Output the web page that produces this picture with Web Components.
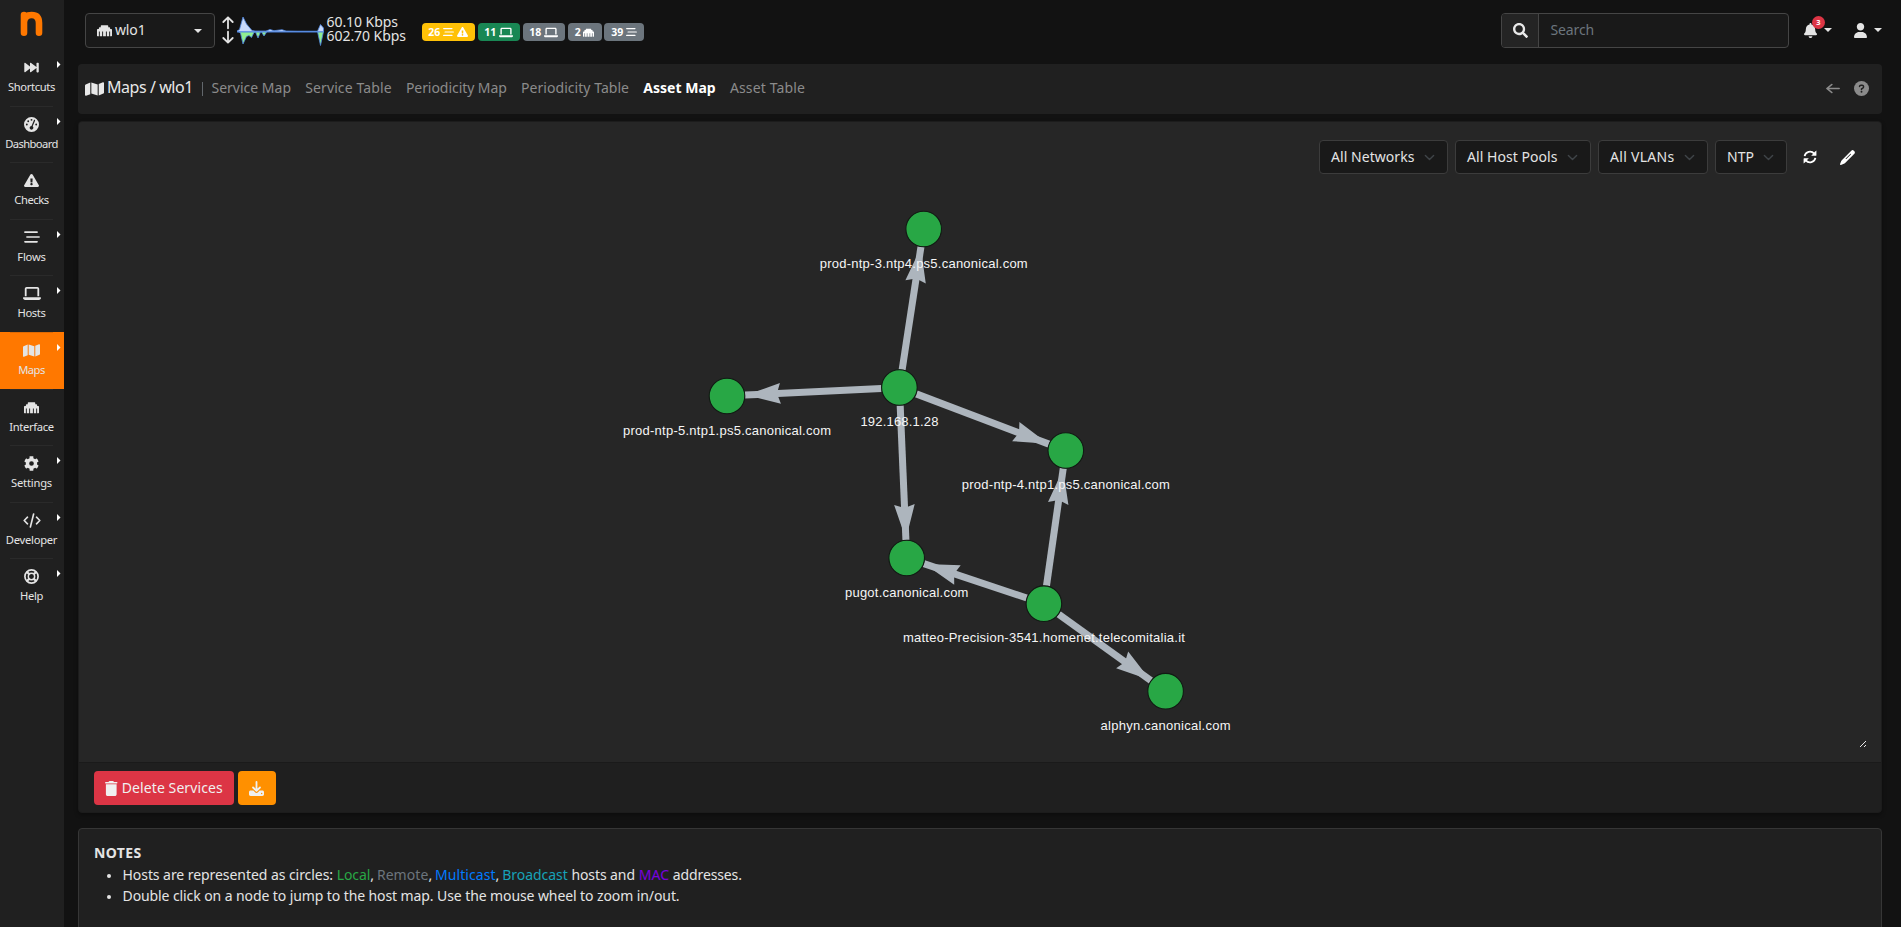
<!DOCTYPE html>
<html lang="en">
<head>
<meta charset="utf-8">
<title>ntopng - Asset Map</title>
<style>
html,body{margin:0;height:100%;overflow:hidden;background:#121212}
body{font:14px/21px "Noto Sans","Open Sans",sans-serif;color:#e4e4e4}
</style>
</head>
<body>
<nt-app></nt-app>
<script>
const ICONS={
 forward:['0 0 512 512','<path d="M10 84c0-16 16-24 28-14l166 148V84c0-16 16-24 28-14l194 168V84c0-12 10-20 22-20h34c12 0 22 8 22 20v344c0 12-10 20-22 20h-34c-12 0-22-8-22-20V274L232 442c-12 10-28 2-28-14V294L38 442c-12 10-28 2-28-14z"/>'],
 gauge:['0 0 512 512','<path fill-rule="evenodd" d="M256 0a256 256 0 1 1 0 512a256 256 0 0 1 0-512zM256 64a32 32 0 1 0 0 64a32 32 0 0 0 0-64zM144 112a32 32 0 1 0 0 64a32 32 0 0 0 0-64zM96 224a32 32 0 1 0 0 64a32 32 0 0 0 0-64zM416 224a32 32 0 1 0 0 64a32 32 0 0 0 0-64zM367 95c-11-5-25 0-30 12l-81 196c-35 0-64 29-64 65s29 64 64 64 64-29 64-64c0-20-9-38-24-50l82-192c5-12 0-26-11-31z"/>'],
 warn:['0 0 576 512','<path d="M569.517 440.013C587.975 472.007 564.806 512 527.94 512H48.054c-36.937 0-59.999-40.055-41.577-71.987L246.423 23.985c18.467-32.009 64.72-31.951 83.154 0l239.94 416.028zM288 354c-25.405 0-46 20.595-46 46s20.595 46 46 46 46-20.595 46-46-20.595-46-46-46zm-43.673-165.346l7.418 136c.347 6.364 5.609 11.346 11.982 11.346h48.546c6.373 0 11.635-4.982 11.982-11.346l7.418-136c.375-6.874-5.098-12.654-11.982-12.654h-63.383c-6.884 0-12.356 5.78-11.981 12.654z"/>'],
 flows:['0 0 512 512','<g fill="none" stroke="currentColor" stroke-width="60" stroke-linecap="round"><path d="M32 80H416M96 256H480M32 432H416"/></g>'],
 laptop:['0 0 640 512','<path fill-rule="evenodd" d="M128 32c-35 0-64 29-64 64v256h64V96h384v256h64V96c0-35-29-64-64-64zM19 384c-11 0-19 9-19 19c0 43 34 77 77 77h486c43 0 77-34 77-77c0-10-8-19-19-19z"/>'],
 map:['0 0 576 512','<path d="M0 140c0-13 8-25 20-30L160 50v370L32 471c-16 6-32-5-32-22zM192 48l192 64v352l-192-64zM416 92l128-51c16-6 32 5 32 22v309c0 13-8 25-20 30L416 462z"/>'],
 ethernet:['0 0 512 512','<path d="M0 232c0-14 10-24 24-24h40v-40c0-14 10-24 24-24h40v-40c0-14 10-24 24-24h208c14 0 24 10 24 24v40h40c14 0 24 10 24 24v40h40c14 0 24 10 24 24v200c0 10-6 16-16 16h-48V288h-32v160h-80V288h-32v160h-96V288h-32v160h-80V288H64v160H16c-10 0-16-6-16-16z"/>'],
 gear:['0 0 512 512','<path fill-rule="evenodd" d="M487 316l-43-25a193 193 0 0 0 0-70l43-25c5-3 7-9 6-14-11-36-30-69-55-96-4-4-10-5-15-3l-43 25a191 191 0 0 0-61-35V24c0-6-4-11-10-12a254 254 0 0 0-110 0c-6 1-10 6-10 12v49a197 197 0 0 0-61 35L86 83c-5-3-11-2-15 3a253 253 0 0 0-55 96c-2 5 1 11 6 14l43 25a194 194 0 0 0 0 70l-43 25c-5 3-7 9-6 14 11 36 30 69 55 96 4 4 10 5 15 3l43-25a191 191 0 0 0 61 35v49c0 6 4 11 10 12a254 254 0 0 0 110 0c6-1 10-6 10-12v-49a197 197 0 0 0 61-35l43 25c5 3 11 2 15-3 25-27 44-60 55-96 1-5-1-11-7-14zM256 336a80 80 0 1 1 0-160a80 80 0 0 1 0 160z"/>'],
 code:['0 0 640 512','<g fill="none" stroke="currentColor" stroke-width="58" stroke-linecap="round" stroke-linejoin="round"><path d="M160 144L42 256L160 368M480 144L598 256L480 368M378 36L262 476"/></g>'],
 help:['0 0 512 512','<g fill="none" stroke="currentColor"><circle cx="256" cy="256" r="225" stroke-width="58"/><circle cx="256" cy="256" r="108" stroke-width="50"/><path stroke-width="72" d="M90 90L182 182M422 90L330 182M90 422L182 330M422 422L330 330"/></g>'],
 search:['0 0 512 512','<path d="M505 442.7L405.3 343c-4.5-4.5-10.6-7-17-7H372c27.6-35.3 44-79.7 44-128C416 93.1 322.9 0 208 0S0 93.1 0 208s93.1 208 208 208c48.3 0 92.7-16.4 128-44v16.3c0 6.4 2.5 12.5 7 17l99.7 99.7c9.4 9.4 24.6 9.4 33.9 0l28.3-28.3c9.4-9.4 9.4-24.6.1-34zM208 336c-70.7 0-128-57.2-128-128 0-70.7 57.2-128 128-128 70.7 0 128 57.2 128 128 0 70.7-57.2 128-128 128z"/>'],
 bell:['0 0 448 512','<path d="M224 512c35.32 0 63.97-28.65 63.97-64H160.03c0 35.35 28.65 64 63.97 64zm215.39-149.71c-19.32-20.76-55.47-51.99-55.47-154.29 0-77.7-54.48-139.9-127.94-155.16V32c0-17.67-14.32-32-31.98-32s-31.98 14.33-31.98 32v20.84C118.56 68.1 64.08 130.3 64.08 208c0 102.3-36.15 133.53-55.47 154.29-6 6.45-8.66 14.16-8.61 21.71.11 16.4 12.98 32 32.1 32h383.8c19.12 0 32-15.6 32.1-32 .05-7.55-2.61-15.27-8.61-21.71z"/>'],
 user:['0 0 448 512','<path d="M224 256c70.7 0 128-57.3 128-128S294.7 0 224 0 96 57.3 96 128s57.3 128 128 128zM174 304C78 304 0 382 0 483c0 16 13 29 30 29h388c17 0 30-13 30-29c0-101-78-179-174-179z"/>'],
 left:['0 0 448 512','<path fill="none" stroke="currentColor" stroke-width="52" stroke-linecap="round" stroke-linejoin="round" d="M420 256H32M186 96L30 256L186 416"/>'],
 question:['0 0 512 512','<circle cx="256" cy="256" r="256"/><path fill="none" stroke="#202020" stroke-width="50" stroke-linecap="round" stroke-linejoin="round" d="M188 186c4-30 22-42 50-42h38c62 0 68 78 20 104l-40 24v18"/><circle cx="256" cy="368" r="32" fill="#202020"/>'],
 refresh:['0 0 512 512','<g fill="none" stroke="currentColor" stroke-width="66"><path d="M58 226A202 202 0 0 1 408 132M454 286A202 202 0 0 1 104 380"/></g><path d="M490 20v172c0 12-8 20-20 20H298l56-56l80-90zM22 492V320c0-12 8-20 20-20h172l-56 56l-80 90z"/>'],
 pen:['0 0 512 512','<path fill-rule="evenodd" d="M386 22c24-24 62-24 86 0l18 18c24 24 24 62 0 86L166 450c-10 10-20 16-33 20L30 510c-18 5-33-10-28-28L42 379c4-13 10-23 20-33zM350 136L196 290c-6 6-6 15 0 21s15 6 21 0l154-154c6-6 6-15 0-21s-15-6-21 0z"/>'],
 trash:['0 0 448 512','<path d="M135 18c6-11 17-18 29-18h120c12 0 23 7 29 18l7 14h96c18 0 32 12 32 26s-14 30-32 30H32C14 88 0 72 0 58s14-26 32-26h96zM32 112h384v336c0 36-28 64-64 64H96c-36 0-64-28-64-64z"/>'],
 download:['0 0 512 512','<path fill-rule="evenodd" d="M0 384c0-32 24-56 56-56h94l64 64c24 22 60 22 84 0l64-64h94c32 0 56 24 56 56v72c0 32-24 56-56 56H56c-32 0-56-24-56-56zM432 400a24 24 0 1 0 0 48a24 24 0 0 0 0-48z"/><path fill="none" stroke="currentColor" stroke-width="62" stroke-linecap="round" stroke-linejoin="round" d="M256 32V330M138 222L256 336L374 222"/>'],
 up:['0 0 12 14','<path fill="none" stroke="currentColor" stroke-width="1.8" stroke-linecap="round" stroke-linejoin="round" d="M6 12.3V1.5M1.3 6L6 1.3L10.7 6"/>'],
 down:['0 0 12 14','<path fill="none" stroke="currentColor" stroke-width="1.8" stroke-linecap="round" stroke-linejoin="round" d="M6 1.7V12.5M1.3 8L6 12.7L10.7 8"/>'],
 chevron:['0 0 16 16','<path fill="none" stroke="currentColor" stroke-width="2" stroke-linecap="round" stroke-linejoin="round" d="M2 5l6 6 6-6"/>'],
 caret:['0 0 8 4','<path d="M0 0H8L4 4z"/>'],
 side:['0 0 4 8','<path d="M0 0L4 4L0 8z"/>']
};
function element(name,render,ready){
  customElements.define(name,class extends HTMLElement{
    connectedCallback(){
      if(this.shadowRoot)return;
      this.attachShadow({mode:'open'}).innerHTML=render(this);
      if(ready)ready(this);
    }
  });
}
element('nt-icon',e=>{
  const [vb,body]=ICONS[e.getAttribute('name')];
  const w=e.getAttribute('w')||16,h=e.getAttribute('h')||w;
  return `<style>:host{display:inline-flex;flex:none;width:${w}px;height:${h}px}svg{display:block;width:100%;height:100%}</style><svg viewBox="${vb}" preserveAspectRatio="none" fill="currentColor">${body}</svg>`;
});
/* Text that is tracked to occupy a given advance width. */
element('nt-text',()=>`<style>:host{display:inline-block;flex:none;white-space:nowrap;transform:translateY(-1px)}span{display:inline-block}</style><span><slot></slot></span>`,e=>{
  const w=+e.getAttribute('w'),s=e.shadowRoot.querySelector('span');
  const n=e.textContent.length,nat=s.getBoundingClientRect().width;
  if(w&&nat){e.style.width=w+'px';s.style.letterSpacing=((w-nat)/n)+'px';}
});
element('nt-logo',()=>`<style>:host{display:flex;height:49px;box-sizing:border-box;padding:11px 0 0 20px}</style>
<svg width="23" height="26" viewBox="0 0 23 26" fill="none" stroke="#ff7800" stroke-width="6.6" stroke-linecap="round"><path d="M4 4.1V21.8M4 11C4.6 5.2 8 4 11.6 4C17 4 19 7 19 12V21.8"/></svg>`);
element('nt-side-item',e=>`<style>
:host{display:block;height:56.6px;box-sizing:border-box;position:relative;text-align:center;font-size:11.2px;line-height:16px;padding-top:10px}
:host([active]){background:#ff7800}
hr{position:absolute;left:10px;right:11px;top:0;margin:0;border:0;height:1px;background:#2a2a2a}
:host([first]) hr{display:none}:host([active]) hr{background:#dd6a04}
.i{display:flex;height:17px;align-items:center;justify-content:center;margin-right:1px}
.l{margin:4px 1px 0 0}
.c{position:absolute;left:57px;top:12px;color:#fff}
</style><hr><div class="i"><nt-icon name="${e.getAttribute('icon')}" w="${e.getAttribute('iw')||15}" h="${e.getAttribute('ih')||15}"></nt-icon></div>
<div class="l"><nt-text w="${e.getAttribute('w')}">${e.getAttribute('label')}</nt-text></div>${e.hasAttribute('menu')?'<nt-icon class="c" name="side" w="3.5" h="7"></nt-icon>':''}`);
element('nt-sidebar',()=>`<style>:host{display:block;width:64px;flex:none;background:#202020;height:100%}</style><nt-logo></nt-logo>
<nt-side-item first icon="forward" ih="13" label="Shortcuts" w="47" menu></nt-side-item>
<nt-side-item icon="gauge" label="Dashboard" w="52.5" menu></nt-side-item>
<nt-side-item icon="warn" ih="13" label="Checks" w="34.5"></nt-side-item>
<nt-side-item icon="flows" iw="16" ih="14" label="Flows" w="28.5" menu></nt-side-item>
<nt-side-item icon="laptop" iw="18" ih="15" label="Hosts" w="28" menu></nt-side-item>
<nt-side-item active icon="map" iw="17" ih="15" label="Maps" w="26.5" menu></nt-side-item>
<nt-side-item icon="ethernet" label="Interface" w="44.5"></nt-side-item>
<nt-side-item icon="gear" label="Settings" w="41" menu></nt-side-item>
<nt-side-item icon="code" iw="18" ih="15" label="Developer" w="51.5" menu></nt-side-item>
<nt-side-item icon="help" label="Help" w="23" menu></nt-side-item>`);
element('nt-badge',e=>`<style>:host{display:inline-flex;box-sizing:border-box;width:${e.getAttribute('w')}px;height:18px;border-radius:4px;background:${e.getAttribute('bg')};align-items:center;justify-content:center;gap:3px;color:#fff;font:bold 10.5px/18px "Noto Sans",sans-serif}</style><slot></slot>`);
element('nt-traffic',()=>`<style>:host{display:flex;align-items:flex-start;height:62px}
.a{display:flex;flex-direction:column;padding-top:16px;gap:0;margin-right:3.5px}.t{display:flex;flex-direction:column;line-height:14px;padding-top:16px;margin-left:2.500px}svg{display:block;margin-top:15px}</style>
<div class="a"><nt-icon name="up" w="12" h="14"></nt-icon><nt-icon name="down" w="12" h="14"></nt-icon></div>
<svg width="87" height="34" viewBox="0 0 87 34" stroke="#4f86e0" stroke-width=".8" stroke-linejoin="round">
<path fill="#90ee90" d="M1 16.5L3.500 18L6 29L9.500 21.500L12 20.500L14.500 22.500L17 17.500L18.500 17L21 23L23.500 17H24.500L27 21L30 16.500H80.500L83.500 30.500L86.500 16.5"/>
<path fill="#c6d8fa" d="M0 16L2.500 14.500L6 2L9.500 9L15 15.500L18 16H29L33 14.500L37 15.700L45 14.700L49 16L60 16.200H80.500L83.500 9.500L86.500 13V17H0z"/><path d="M0 16.700H86.500"/></svg>
<div class="t"><nt-text w="71.500">60.10 Kbps</nt-text><nt-text w="79.500">602.70 Kbps</nt-text></div>`);
element('nt-topbar',()=>`<style>:host{display:flex;height:64px;padding:0 19px 0 21px;align-items:flex-start}
.dd{display:flex;box-sizing:border-box;width:130px;height:35px;margin-top:13px;border:1px solid #454545;border-radius:4px;background:#191919;align-items:center;padding:0 12px 0 11px;gap:3px}
.dd nt-icon:last-child{margin-left:auto}
nt-traffic{margin-left:6.500px}.b{display:flex;gap:3px;margin:23px 0 0 15.500px}.b :last-child{margin-left:-.5px}
.s{margin:13px 15px 0 auto;display:flex;box-sizing:border-box;width:288px;height:35px;border:1px solid #454545;border-radius:4px;background:#191919;align-items:center;color:#6c757d;overflow:hidden}
.s div{display:flex;width:36px;height:33px;background:#242424;border-right:1px solid #454545;align-items:center;justify-content:center;color:#e8e8e8;margin-right:11.500px}
.n{position:relative;display:flex;gap:7px;align-items:flex-start;margin-top:23px;width:50px;box-sizing:border-box}.n nt-icon+nt-icon{margin-top:5px}
.n b{position:absolute;left:8px;top:-7.500px;width:13px;height:13px;border-radius:7px;background:#dc3545;color:#fff;font-size:7.500px;line-height:13px;text-align:center}
.u{width:28px}</style>
<div class="dd"><nt-icon name="ethernet" w="15" h="15"></nt-icon><nt-text w="30.500">wlo1</nt-text><nt-icon name="caret" w="8" h="4"></nt-icon></div>
<nt-traffic></nt-traffic>
<div class="b"><nt-badge bg="#ffc107" w="53"><span>26</span><nt-icon name="flows" w="11" h="10"></nt-icon><nt-icon name="warn" w="11" h="10"></nt-icon></nt-badge>
<nt-badge bg="#198754" w="42"><span>11</span><nt-icon name="laptop" w="14" h="11"></nt-icon></nt-badge>
<nt-badge bg="#6c757d" w="42"><span>18</span><nt-icon name="laptop" w="14" h="11"></nt-icon></nt-badge>
<nt-badge bg="#6c757d" w="34"><span>2</span><nt-icon name="ethernet" w="11" h="11"></nt-icon></nt-badge>
<nt-badge bg="#6c757d" w="40"><span>39</span><nt-icon name="flows" w="11" h="10"></nt-icon></nt-badge></div>
<div class="s"><div><nt-icon name="search" w="15"></nt-icon></div><nt-text w="43.500">Search</nt-text></div>
<div class="n"><nt-icon name="bell" w="13" h="15"></nt-icon><nt-icon name="caret" w="8" h="4"></nt-icon><b>3</b></div>
<div class="n u"><nt-icon name="user" w="13" h="15"></nt-icon><nt-icon name="caret" w="8" h="4"></nt-icon></div>`);
element('nt-navbar',()=>`<style>:host{display:flex;height:50px;margin:0 19px 0 14px;box-sizing:border-box;background:#202020;border-radius:4px;align-items:center;padding:0 13.500px 1px 7px;color:#8b8b8b}
.t{color:#e8e8e8;font-size:16px;margin:0 9px 0 3px}.m{color:#e8e8e8}i{width:1px;height:14px;background:#62676c;margin-right:8.500px}.l{display:flex;gap:14.200px}.on{font-weight:bold;color:#fff}.r{margin-left:auto;display:flex;gap:13.500px;align-items:center}</style>
<nt-icon class="m" name="map" w="19" h="16"></nt-icon><nt-text class="t" w="86">Maps / wlo1</nt-text><i></i>
<div class="l"><nt-text w="79.500">Service Map</nt-text><nt-text w="86.500">Service Table</nt-text><nt-text w="101">Periodicity Map</nt-text><nt-text w="108">Periodicity Table</nt-text><nt-text class="on" w="72.500">Asset Map</nt-text><nt-text w="75">Asset Table</nt-text></div>
<div class="r"><nt-icon name="left" w="14" h="13"></nt-icon><nt-icon name="question" w="15"></nt-icon></div>`);
element('nt-select',e=>`<style>:host{display:flex;box-sizing:border-box;width:${e.getAttribute('w')}px;height:34px;border:1px solid #3c3c3c;border-radius:4px;background:#191919;align-items:center;justify-content:space-between;padding:0 12px 0 11px}nt-icon{color:#3f4448}</style><nt-text w="${e.getAttribute('tw')}">${e.dataset.label}</nt-text><nt-icon name="chevron" w="11"></nt-icon>`);
const NODES={a:[923.7,229,'prod-ntp-3.ntp4.ps5.canonical.com',208],b:[899.4,387.5,'192.168.1.28',78],c:[727,396,'prod-ntp-5.ntp1.ps5.canonical.com',208],d:[1065.8,450.5,'prod-ntp-4.ntp1.ps5.canonical.com',208],e:[906.7,558,'pugot.canonical.com',123.500],f:[1043.9,603.7,'matteo-Precision-3541.homenet.telecomitalia.it',282],g:[1165.6,691.2,'alphyn.canonical.com',130]};
element('nt-graph',()=>{
  const edges=['ba','bc','bd','be','fd','fe','fg'].map(k=>{
    const p=NODES[k[0]],q=NODES[k[1]],dx=q[0]-p[0],dy=q[1]-p[1],len=Math.hypot(dx,dy),ang=Math.atan2(dy,dx)*180/Math.PI;
    return `<g transform="translate(${p[0]} ${p[1]}) rotate(${ang})"><path stroke-width="7" stroke="#adb5bd" d="M18 0H${len-18}"/><path d="M${len-19} 0l-34.500-10.300l3.500 10.300l-3.500 10.300z"/></g>`;
  }).join('');
  const nodes=Object.values(NODES).map(n=>`<circle cx="${n[0]}" cy="${n[1]}" r="17.8" fill="#28a745" stroke="#111a13" stroke-width="1.1"/>`).join('');
  const labels=Object.values(NODES).map(n=>`<text x="${n[0]}" y="${n[1]+38.5}" textLength="${n[3]}">${n[2]}</text>`).join('');
  return `<style>:host{display:block;width:100%;height:100%}svg{display:block}text{font:13px "Liberation Sans",Arial,sans-serif;fill:#f5f5f5;text-anchor:middle}</style><svg width="1802" height="640" viewBox="79 122 1802 640"><g fill="#adb5bd">${edges}</g>${nodes}${labels}</svg>`;
});
element('nt-map-card',()=>`<style>:host{display:block;box-sizing:border-box;height:692px;margin:7px 19px 0 14px;border:1px solid #1c1c1c;border-radius:4px;background:#1f1f1f;box-shadow:0 2px 4px #0005;overflow:hidden}
.m{position:relative;height:640px;background:#262626;border-bottom:1px solid #1a1a1a}
.tools{position:absolute;right:26px;top:18px;display:flex;gap:7px;align-items:center;color:#e4e4e4}.tools nt-icon{color:#fff}
.h{position:absolute;right:14px;bottom:14px}
.f{display:flex;gap:4px;padding:8px 15px}.bt{display:flex;box-sizing:border-box;height:34px;border-radius:4px;align-items:center;justify-content:center;gap:4px;color:#f0f0f0}</style>
<div class="m"><nt-graph></nt-graph><div class="tools"><nt-select w="129" tw="83.500" data-label="All Networks"></nt-select><nt-select w="136" tw="90.500" data-label="All Host Pools"></nt-select><nt-select w="110" tw="64.500" data-label="All VLANs"></nt-select><nt-select w="72" tw="27" data-label="NTP"></nt-select><nt-icon style="margin:0 16px 0 9px" name="refresh" w="14"></nt-icon><nt-icon name="pen" w="15"></nt-icon></div>
<svg class="h" width="8" height="8" stroke="#e8e8e8" stroke-width="1"><path d="M1 7L7 1M5 7L7 5"/></svg></div>
<div class="f"><div class="bt" style="width:140px;background:#dc3545"><nt-icon name="trash" w="12.500" h="15"></nt-icon><nt-text w="101">Delete Services</nt-text></div><div class="bt" style="width:38px;background:#ff9000;padding-right:1px"><nt-icon name="download" w="15"></nt-icon></div></div>`);
element('nt-notes',()=>`<style>:host{display:block;box-sizing:border-box;height:110px;margin:15px 19px 0 14px;border:1px solid #363636;border-radius:4px 4px 0 0;background:#202020;padding:14px 15px}
ul{margin:1px 0 0;padding:0;list-style:none}li{display:flex;height:21px;align-items:center}li::before{content:"";width:4px;height:4px;border-radius:2px;background:#e4e4e4;margin:1px 11.500px 0 13px}li>*+*{margin-left:3.700px}li>.k{margin-left:0}</style>
<div><nt-text w="47.500" style="font-weight:bold">NOTES</nt-text></div>
<ul><li><nt-text w="210.500">Hosts are represented as circles:</nt-text><nt-text w="33.500" style="color:#28a745">Local</nt-text><nt-text w="3" class="k">,</nt-text><nt-text w="51.500" style="color:#6c757d">Remote</nt-text><nt-text w="3" class="k">,</nt-text><nt-text w="60.500" style="color:#007bff">Multicast</nt-text><nt-text w="3" class="k">,</nt-text><nt-text w="65.500" style="color:#17a2b8">Broadcast</nt-text><nt-text w="63.500">hosts and</nt-text><nt-text w="30.500" style="color:#7b00e0">MAC</nt-text><nt-text w="69">addresses.</nt-text></li>
<li><nt-text w="557">Double click on a node to jump to the host map. Use the mouse wheel to zoom in/out.</nt-text></li></ul>`);
element('nt-app',()=>`<style>:host{display:flex;width:1901px;height:927px;overflow:hidden;background:#121212}main{flex:1;min-width:0}</style><nt-sidebar></nt-sidebar><main><nt-topbar></nt-topbar><nt-navbar></nt-navbar><nt-map-card></nt-map-card><nt-notes></nt-notes></main>`);
</script>
</body>
</html>
